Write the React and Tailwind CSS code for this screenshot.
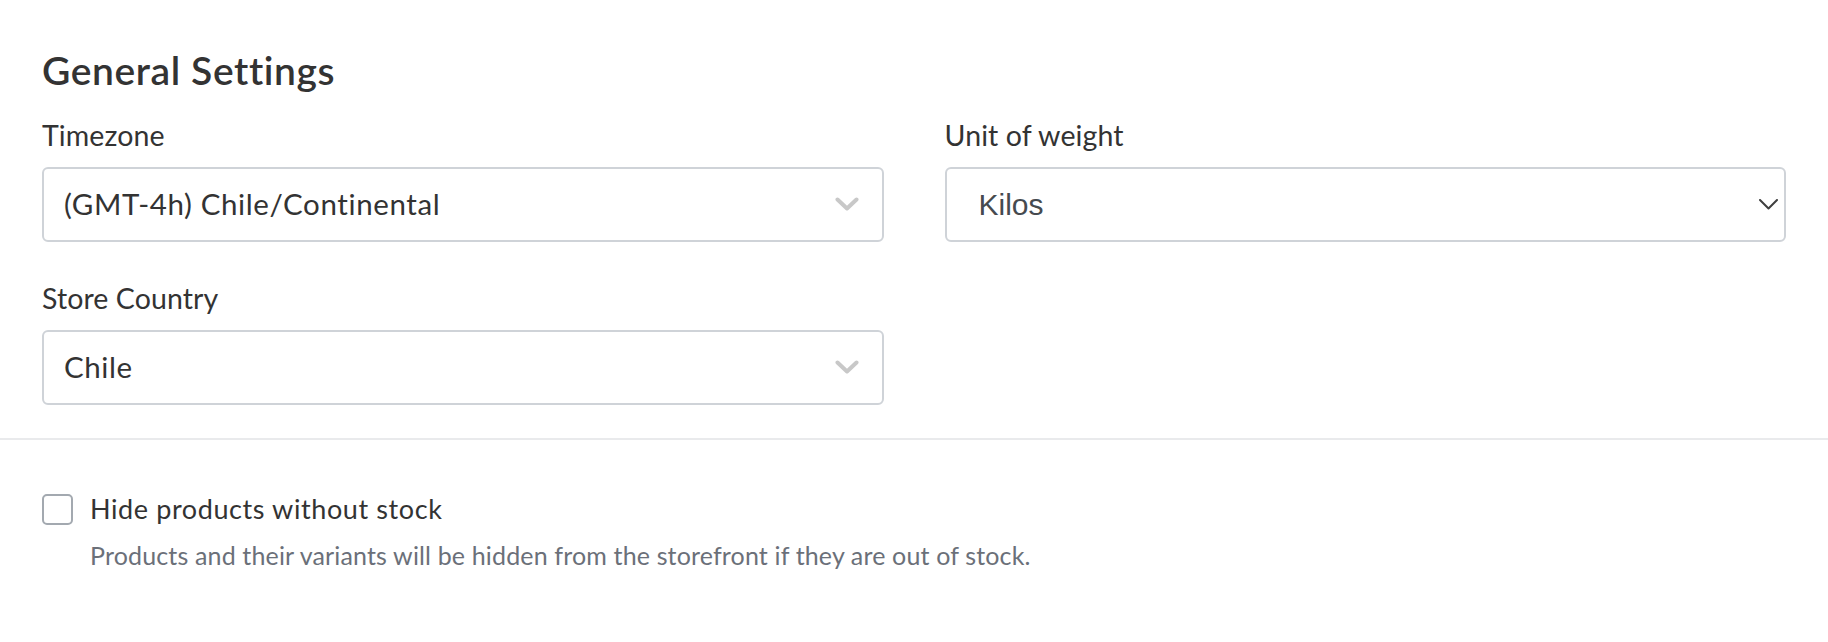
import { useState } from "react";

const font = { fontFamily: "Lato, 'Noto Sans', sans-serif" };

function ChevronThick() {
  return (
    <svg width="24" height="15" viewBox="0 0 24 15" fill="none">
      <path
        d="M2.5 2.5 L12 11.5 L21.5 2.5"
        stroke="#c8c8c8"
        strokeWidth="4"
        strokeLinecap="round"
        strokeLinejoin="round"
      />
    </svg>
  );
}

function ChevronThin() {
  return (
    <svg width="19" height="11" viewBox="0 0 19 11" fill="none">
      <path
        d="M1 1 L9.5 9.5 L18 1"
        stroke="#3f3f3f"
        strokeWidth="2"
        strokeLinecap="round"
        strokeLinejoin="round"
      />
    </svg>
  );
}

function Field({ label, value, native = false }) {
  return (
    <div>
      <div className="text-[28.5px] leading-[32px] tracking-[0.1px] text-[#333333] mb-[16px]">
        {label}
      </div>
      <div className="h-[75px] rounded-[6px] border-2 border-[#cfd3d8] bg-white flex items-center justify-between">
        {native ? (
          <>
            <span className="pl-[32px] text-[30px] text-[#464a4f] font-['Liberation_Sans',Arial,sans-serif]">
              {value}
            </span>
            <span className="pr-[6px] flex">
              <ChevronThin />
            </span>
          </>
        ) : (
          <>
            <span className="pl-[20px] text-[29.5px] tracking-[0.6px] text-[#333333]">
              {value}
            </span>
            <span className="pr-[23px] flex">
              <ChevronThick />
            </span>
          </>
        )}
      </div>
    </div>
  );
}

export default function App() {
  const [hideStock, setHideStock] = useState(false);

  return (
    <div className="min-h-screen bg-white" style={font}>
      <div className="px-[42px] pt-[50px] pb-[33px]">
        <h2 className="text-[39px] leading-[40px] tracking-[0.6px] font-semibold text-[#333333] mb-[29px]">
          General Settings
        </h2>
        <div className="grid grid-cols-2 gap-x-[61px] gap-y-[40px]">
          <Field label="Timezone" value="(GMT-4h) Chile/Continental" />
          <Field label="Unit of weight" value="Kilos" native />
          <Field label="Store Country" value="Chile" />
        </div>
      </div>
      <div className="h-[2px] bg-[#e9eaec]" />
      <div className="px-[42px] pt-[53px]">
        <label className="flex items-center gap-[17px] cursor-pointer">
          <span
            onClick={() => setHideStock(!hideStock)}
            className="w-[31px] h-[31px] rounded-[5px] border-2 border-[#a3a9b0] bg-white flex items-center justify-center"
          >
            {hideStock && (
              <svg width="18" height="14" viewBox="0 0 18 14" fill="none">
                <path d="M2 7 L7 12 L16 2" stroke="#333" strokeWidth="2.5" />
              </svg>
            )}
          </span>
          <span className="text-[27px] leading-[32px] tracking-[0.6px] text-[#333333]">
            Hide products without stock
          </span>
        </label>
        <p className="ml-[48px] mt-[15px] text-[25px] leading-[30px] tracking-[0.15px] text-[#6b7079]">
          Products and their variants will be hidden from the storefront if they are out of stock.
        </p>
      </div>
    </div>
  );
}
